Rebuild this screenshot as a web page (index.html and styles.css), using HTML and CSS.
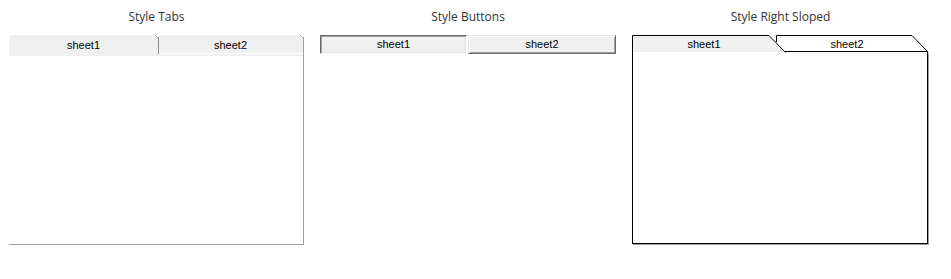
FILE: index.html
```html
<!DOCTYPE html>
<html>
	<head>
		<meta charset="utf-8">
		<title>Tab styles</title>
		<link rel="stylesheet" href="styles.css">
	</head>
	<body>
		<div class="row">
			<!-- classic tabs -->
			<div class="col col1">
				<p class="title">Style Tabs</p>
				<div class="strip tabs-strip">
					<svg class="deco" width="295" height="21" viewBox="0 0 295 21" shape-rendering="crispEdges">
						<polygon points="0,1 1,0 146,0 149,3 149,21 0,21" fill="#f0f0f0"/>
						<polygon points="150,0 291,0 294,3 294,21 150,21" fill="#f0f0f0"/>
						<rect x="146" y="0" width="1" height="1" fill="#a0a0a0"/>
						<rect x="147" y="1" width="1" height="1" fill="#a0a0a0"/>
						<rect x="148" y="2" width="1" height="1" fill="#a0a0a0"/>
						<rect x="149" y="2" width="1" height="17" fill="#8c8c8c"/>
						<rect x="150" y="18" width="144" height="1" fill="#ffffff"/>
						<rect x="291" y="0" width="1" height="1" fill="#a0a0a0"/>
						<rect x="292" y="1" width="1" height="1" fill="#a0a0a0"/>
						<rect x="293" y="2" width="1" height="1" fill="#a0a0a0"/>
						<rect x="294" y="2" width="1" height="19" fill="#a0a0a0"/>
					</svg>
					<span class="label" style="width: 149px">sheet1</span>
					<span class="label" style="width: 145px">sheet2</span>
				</div>
				<div class="tabs-body"></div>
			</div>

			<!-- button style -->
			<div class="col col2">
				<p class="title">Style Buttons</p>
				<div class="buttons">
					<span class="btn down">sheet1</span>
					<span class="btn up">sheet2</span>
				</div>
			</div>

			<!-- right sloped -->
			<div class="col col3">
				<p class="title">Style Right Sloped</p>
				<div class="strip sloped-strip">
					<svg class="deco" width="297" height="18" viewBox="0 0 297 18" shape-rendering="geometricPrecision">
						<polygon points="0,0 137,0 153,17 0,17" fill="#f0f0f0"/>
						<polygon points="144,0 280,0 296,16 153,16 144,7" fill="#ffffff"/>
						<g stroke="#000" stroke-width="1" fill="none">
							<path d="M0.5,18 V0.5 H137 L153.5,17.5"/>
							<path d="M144.5,7 V0.5 H280 L295.5,16.5"/>
							<path d="M152,16.5 H296"/>
							<path d="M295.5,16 V18"/>
						</g>
						<rect x="296" y="17" width="1" height="1" fill="#a0a0a0"/>
					</svg>
					<span class="label" style="width: 144px">sheet1</span>
					<span class="label" style="width: 142px">sheet2</span>
				</div>
				<div class="sloped-body"></div>
			</div>
		</div>
	</body>
</html>
```

FILE: styles.css
```css
body, html{
	margin: 0;
	background-color: #ffffff;
}
.row{
	display: grid;
	grid-template-columns: 295px 296px 297px;
	column-gap: 16px;
	padding: 9px 0 0 9px;
}
.title{
	margin: 0;
	height: 26px;
	line-height: 16px;
	text-align: center;
	font-family: "Open Sans", "Noto Sans", sans-serif;
	font-size: 12px;
	color: #333333;
}
.strip{
	position: relative;
	display: flex;
}
.deco{
	position: absolute;
	left: 0;
	top: 0;
}
.label{
	position: relative;
	display: block;
	text-align: center;
	font-family: "Liberation Sans", Arial, sans-serif;
	font-size: 11px;
	color: #000000;
}
.tabs-strip{
	height: 21px;
}
.tabs-strip .label{
	line-height: 20px;
}
.tabs-body{
	height: 188px;
	border-right: 1px solid #a0a0a0;
	border-bottom: 1px solid #a0a0a0;
}
.buttons{
	display: flex;
	gap: 1px;
}
.btn{
	box-sizing: border-box;
	height: 19px;
	line-height: 17px;
	text-align: center;
	font-family: "Liberation Sans", Arial, sans-serif;
	font-size: 11px;
	color: #000000;
	background-color: #f0f0f0;
}
.btn.down{
	width: 147px;
	border-top: 1px solid #696969;
	border-left: 1px solid #696969;
	border-bottom: 1px solid #ffffff;
	border-right: 1px solid #ffffff;
	box-shadow: inset 1px 1px #a0a0a0, inset -1px -1px #e3e3e3;
}
.btn.up{
	width: 148px;
	border-top: 1px solid #e3e3e3;
	border-left: 1px solid #e3e3e3;
	border-bottom: 1px solid #696969;
	border-right: 1px solid #696969;
	box-shadow: inset 1px 1px #ffffff, inset -1px -1px #a0a0a0;
}
.sloped-strip{
	height: 18px;
}
.sloped-strip .label{
	line-height: 18px;
}
.sloped-body{
	box-sizing: border-box;
	width: 296px;
	height: 191px;
	border-left: 1px solid #000000;
	border-right: 1px solid #000000;
	border-bottom: 1px solid #000000;
	box-shadow: 1px 1px 0 #a0a0a0;
}
```
